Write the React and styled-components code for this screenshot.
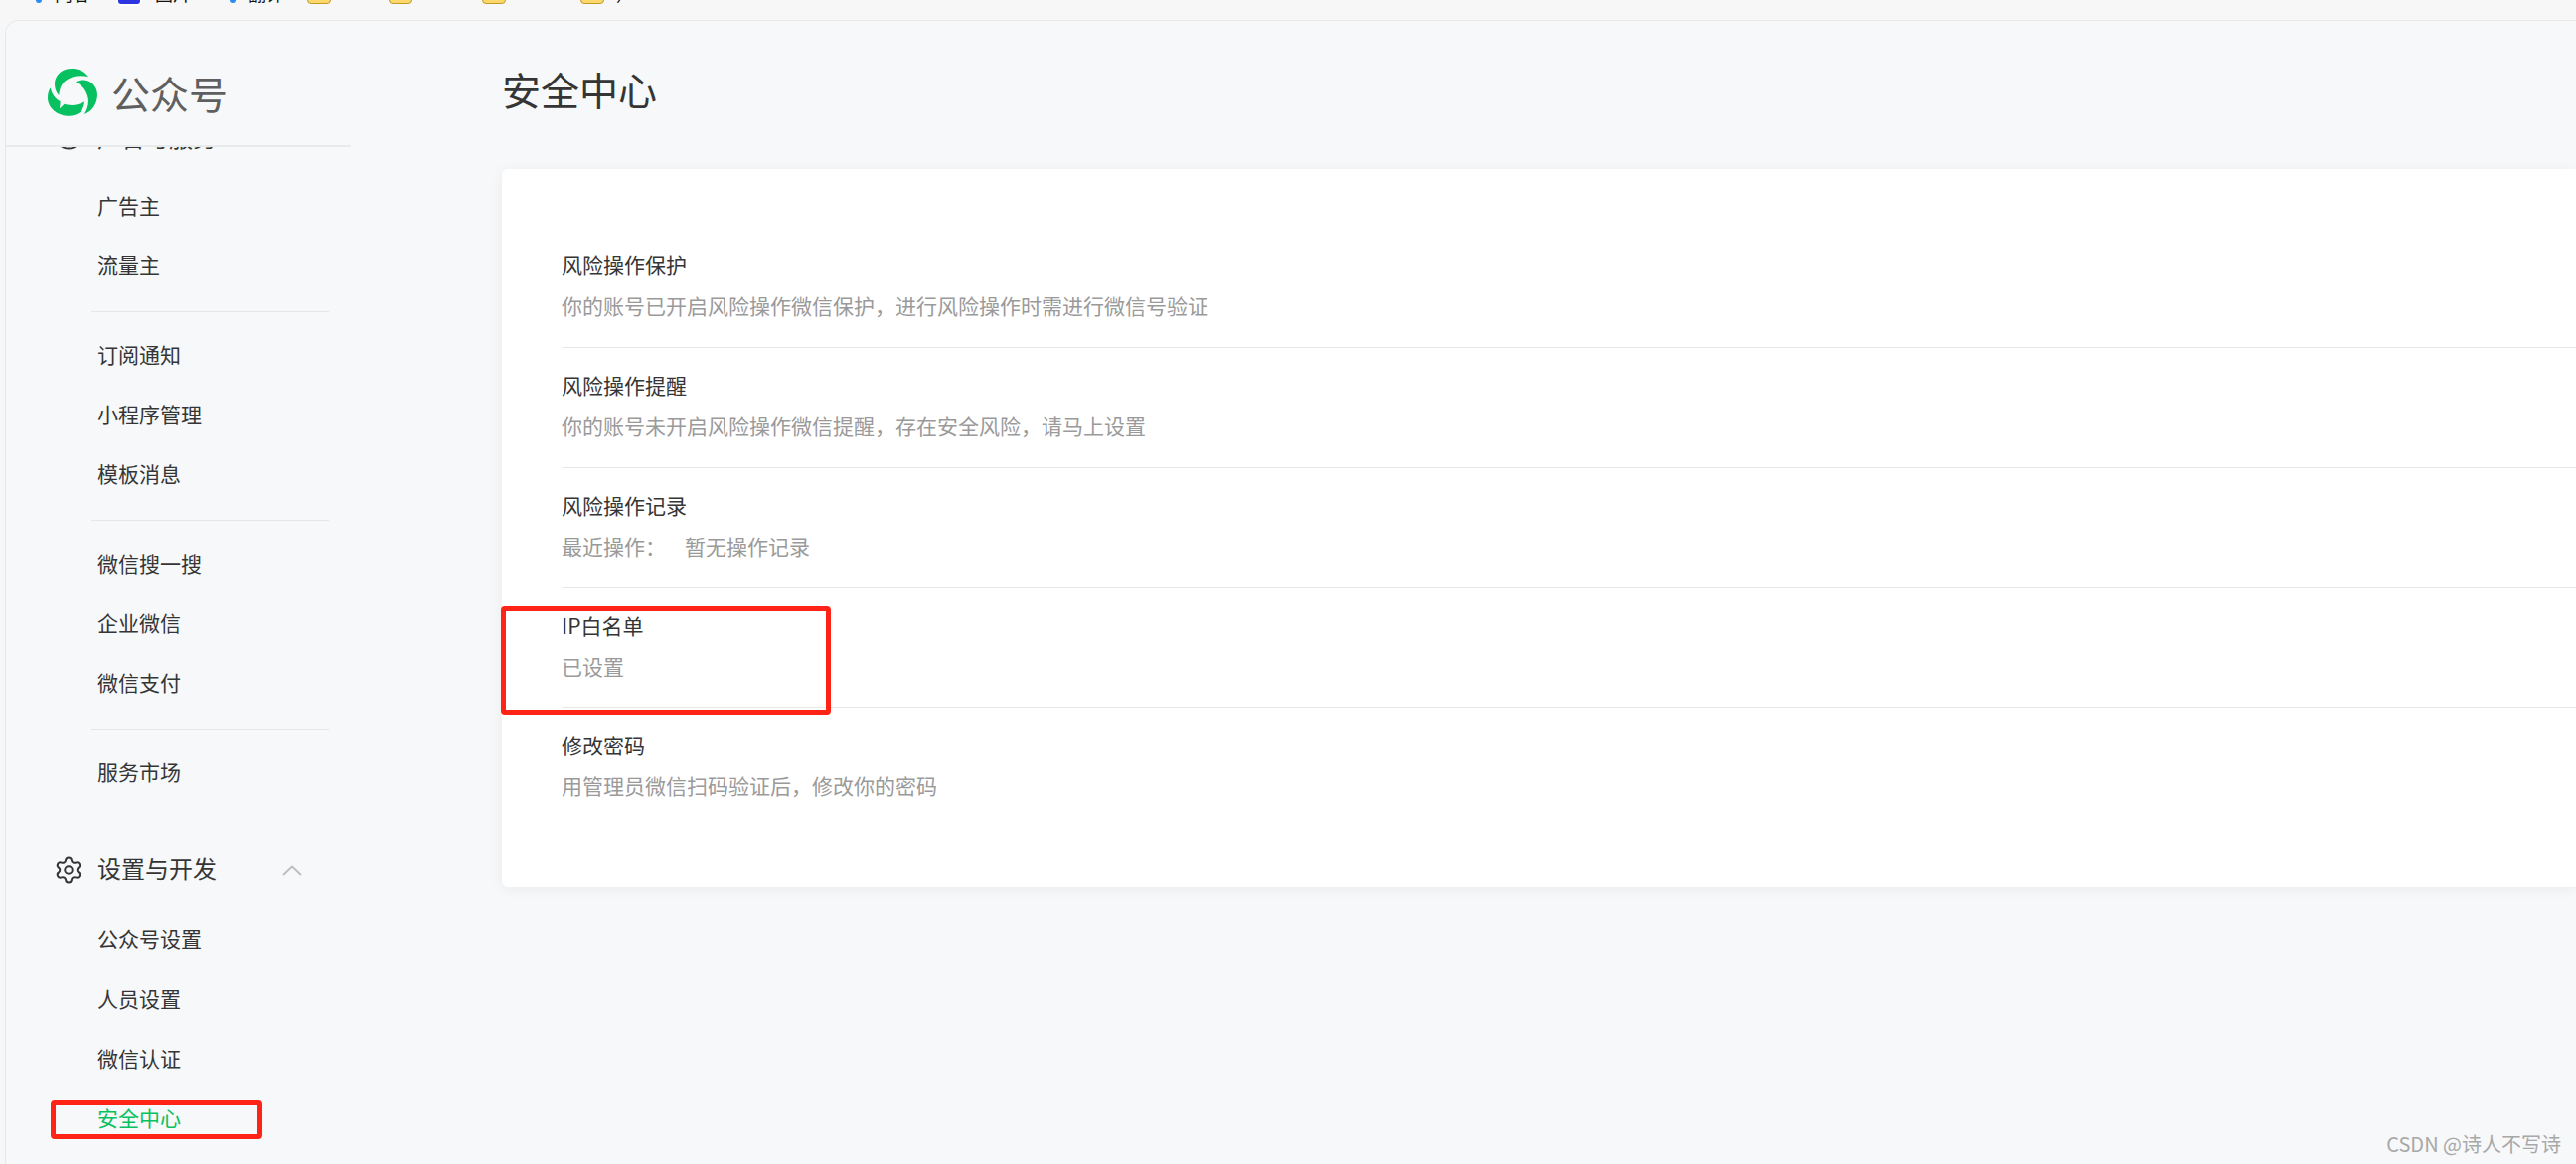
import React from 'react';
import styled, {createGlobalStyle} from 'styled-components';
import {Circle, Settings} from 'lucide-react';

const GlobalStyle = createGlobalStyle`
    html, body {
        margin: 0;
        padding: 0;
        height: 100%;
        overflow: hidden;
        background: #f7f7f7;
        font-family: "Noto Sans CJK SC", "Liberation Sans", sans-serif;
    }
`;

const Page = styled.div`
    display: flex;
    flex-direction: column;
    height: 1171px;
    position: relative;
    overflow: hidden;
`;

const BookmarkBar = styled.div`
    display: flex;
    align-items: flex-start;
    height: 20px;
    flex-shrink: 0;
    overflow: hidden;
    padding-left: 36px;
`;

const BookmarkDot = styled.span`
    width: 6px;
    height: 6px;
    margin-top: -3px;
    margin-right: ${props => props.$gap}px;
    background: #2b8cf0;
    border-radius: 50%;
    flex-shrink: 0;
`;

const BookmarkLabel = styled.span`
    font-size: 18px;
    line-height: 20px;
    margin-top: -17px;
    margin-right: ${props => props.$gap}px;
    color: #111;
    white-space: nowrap;
`;

const BookmarkBadge = styled.span`
    width: 22px;
    height: 8px;
    margin-top: -4px;
    margin-right: 15px;
    background: #2b35e0;
    border-radius: 3px;
    flex-shrink: 0;
    box-shadow: 0 0 0 2px #fff;
`;

const BookmarkFolder = styled.span`
    box-sizing: border-box;
    width: 24px;
    height: 14px;
    margin-top: -10px;
    margin-right: ${props => props.$gap}px;
    background: #fcd76a;
    border: 1px solid #c49a2c;
    border-radius: 4px;
    flex-shrink: 0;
`;

const Window = styled.div`
    display: flex;
    flex: 1;
    min-height: 0;
    margin-left: 5px;
    background: #f6f8f9;
    border-top: 1px solid #e8e8e8;
    border-left: 1px solid #e8e8e8;
    border-top-left-radius: 14px;
    overflow: hidden;
`;

const Sidebar = styled.aside`
    display: flex;
    flex-direction: column;
    width: 347px;
    flex-shrink: 0;
    overflow: hidden;
`;

const SidebarHeader = styled.div`
    display: flex;
    align-items: center;
    gap: 14px;
    box-sizing: border-box;
    height: 127px;
    flex-shrink: 0;
    padding: 18px 0 0 42px;
    background: #f6f8f9;
    border-bottom: 2px solid #e9eaec;
    position: relative;
    z-index: 1;
`;

const LogoText = styled.span`
    font-size: 39px;
    line-height: 48px;
    color: #5f5f5f;
`;

const Nav = styled.nav`
    display: flex;
    flex-direction: column;
    margin-top: -31px;
`;

const GroupHeader = styled.div`
    display: flex;
    align-items: center;
    height: 40px;
    margin-top: ${props => props.$top || 0}px;
    margin-bottom: 21px;
    padding-left: 48px;
    color: #353535;
    svg.gear {
        margin-right: 14px;
        flex-shrink: 0;
    }
    svg.chevron {
        margin-left: 66px;
    }
`;

const GroupLabel = styled.span`
    font-size: 24px;
    line-height: 36px;
    margin-top: ${props => props.$raise}px;
`;

const NavItem = styled.div`
    position: relative;
    height: 60px;
    padding-left: 92px;
    font-size: 21px;
    line-height: 56px;
    color: ${props => (props.$active ? '#07c160' : '#353535')};
`;

const NavDivider = styled.div`
    width: 239px;
    height: 1px;
    margin: 15px 0 14px 86px;
    background: #e4e6e8;
`;

const Main = styled.main`
    flex: 1;
    min-width: 0;
    padding: 38px 0 0 152px;
`;

const PageTitle = styled.h1`
    margin: 0 0 51px;
    font-size: 39px;
    font-weight: 400;
    line-height: 60px;
    color: #353535;
`;

const Card = styled.section`
    box-sizing: border-box;
    height: 722px;
    padding: 59.2px 0 0 60px;
    background: #fff;
    border-radius: 6px 0 0 6px;
    box-shadow: 0 2px 14px rgba(0, 0, 0, 0.06);
`;

const Row = styled.div`
    position: relative;
    box-sizing: border-box;
    height: 120.8px;
    padding-top: 22px;
    border-bottom: ${props => (props.$last ? 'none' : '1px solid #e7e7e7')};
`;

const RowTitle = styled.div`
    font-size: 21px;
    line-height: 30px;
    color: #353535;
`;

const RowDesc = styled.div`
    margin-top: 11px;
    font-size: 21px;
    line-height: 30px;
    color: #9a9a9a;
`;

const RowValue = styled.span`
    margin-left: 19px;
`;

// red annotation boxes drawn over the screenshot
const MarkBox = styled.div`
    position: absolute;
    box-sizing: border-box;
    left: ${props => props.$left}px;
    top: ${props => props.$top}px;
    width: ${props => props.$width}px;
    height: ${props => props.$height}px;
    border: 5px solid #ff2416;
    border-radius: 4px;
    pointer-events: none;
`;

const Watermark = styled.div`
    position: absolute;
    right: 15px;
    bottom: 6px;
    font-size: 20px;
    line-height: 28px;
    color: #a8a8a8;
    white-space: nowrap;
`;

const Logo = () => (
    <svg width="50" height="48" viewBox="0 0 50 48" fill="#07c160">
        <path d="M41 8.300C37 2.500 30.500 0 24 0C15 0 7.500 6 7 14.500C6.700 19 8.200 23.500 11.300 27C11.800 21 13.500 16 17.500 12.500C23.500 7.500 33 5.800 41 8.300Z" />
        <path d="M28 13.300C34 10.500 41 11 45.500 15.500C49 19 50.500 24 49.800 29C49 36.500 44 43.500 37 46C40 40.500 41.500 35.500 40.700 30C39.500 23 35 17 28 13.300Z" />
        <path d="M2.700 19.300C0.800 22.500 0 26 0 29.500C0 39.500 9.500 47.800 21.500 47.800C25.500 47.800 30 46.300 33.700 43.500C35.600 40.500 36.700 37 37 33.300C33 35.800 28.500 37 24 37C21.200 37 18.800 36.500 16.800 35.800L12 40.300L12.700 33.200C7.500 30.500 4 25.500 2.700 19.300Z" />
    </svg>
);

const Chevron = () => (
    <svg className="chevron" width="20" height="11" viewBox="0 0 20 11" fill="none" stroke="#bdbdbd" strokeWidth="1.800">
        <polyline points="1,10 10,1.500 19,10" />
    </svg>
);

const rows = [
    {title: '风险操作保护', desc: '你的账号已开启风险操作微信保护，进行风险操作时需进行微信号验证'},
    {title: '风险操作提醒', desc: '你的账号未开启风险操作微信提醒，存在安全风险，请马上设置'},
    {title: '风险操作记录', desc: '最近操作：', value: '暂无操作记录'},
    {title: 'IP白名单', desc: '已设置', marked: true},
    {title: '修改密码', desc: '用管理员微信扫码验证后，修改你的密码'},
];

const App = () => (
    <Page>
        <GlobalStyle />
        <BookmarkBar>
            <BookmarkDot $gap={13} />
            <BookmarkLabel $gap={28}>内容</BookmarkLabel>
            <BookmarkBadge />
            <BookmarkLabel $gap={39}>图片</BookmarkLabel>
            <BookmarkDot $gap={13} />
            <BookmarkLabel $gap={23}>翻译</BookmarkLabel>
            <BookmarkFolder $gap={58} />
            <BookmarkFolder $gap={70} />
            <BookmarkFolder $gap={75} />
            <BookmarkFolder $gap={12} />
            <BookmarkLabel $gap={0}>）</BookmarkLabel>
        </BookmarkBar>
        <Window>
            <Sidebar>
                <SidebarHeader>
                    <Logo />
                    <LogoText>公众号</LogoText>
                </SidebarHeader>
                <Nav>
                    <GroupHeader>
                        <Circle className="gear" size={30} strokeWidth={1.600} color="#353535" />
                        <GroupLabel $raise={1}>广告与服务</GroupLabel>
                    </GroupHeader>
                    <NavItem>广告主</NavItem>
                    <NavItem>流量主</NavItem>
                    <NavDivider />
                    <NavItem>订阅通知</NavItem>
                    <NavItem>小程序管理</NavItem>
                    <NavItem>模板消息</NavItem>
                    <NavDivider />
                    <NavItem>微信搜一搜</NavItem>
                    <NavItem>企业微信</NavItem>
                    <NavItem>微信支付</NavItem>
                    <NavDivider />
                    <NavItem>服务市场</NavItem>
                    <GroupHeader $top={47}>
                        <Settings className="gear" size={30} strokeWidth={1.600} color="#353535" />
                        <GroupLabel $raise={-4}>设置与开发</GroupLabel>
                        <Chevron />
                    </GroupHeader>
                    <NavItem>公众号设置</NavItem>
                    <NavItem>人员设置</NavItem>
                    <NavItem>微信认证</NavItem>
                    <NavItem $active>
                        安全中心
                        <MarkBox $left={45} $top={11} $width={213} $height={39} />
                    </NavItem>
                </Nav>
            </Sidebar>
            <Main>
                <PageTitle>安全中心</PageTitle>
                <Card>
                    {rows.map((row, i) => (
                        <Row key={row.title} $last={i === rows.length - 1}>
                            <RowTitle>{row.title}</RowTitle>
                            <RowDesc>
                                {row.desc}
                                {row.value && <RowValue>{row.value}</RowValue>}
                            </RowDesc>
                            {row.marked && <MarkBox $left={-61} $top={18} $width={332} $height={109} />}
                        </Row>
                    ))}
                </Card>
            </Main>
        </Window>
        <Watermark>CSDN @诗人不写诗</Watermark>
    </Page>
);

export default App;
